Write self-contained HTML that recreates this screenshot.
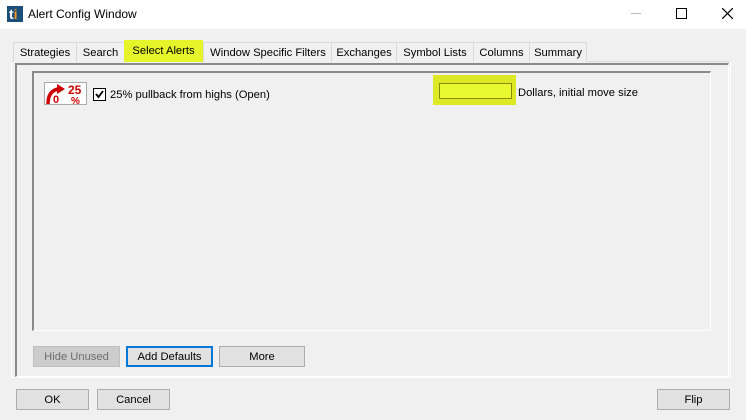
<!DOCTYPE html>
<html><head><style>
body{margin:0;width:746px;height:420px;background:#f0f0f0;font-family:"Liberation Sans",sans-serif;font-size:11.2px;position:relative;overflow:hidden;color:#000}
.a{position:absolute}
.title{left:0;top:0;width:746px;height:29px;background:#fff}
.tab{position:absolute;top:42px;height:19px;border:1px solid #d9d9d9;border-bottom:none;background:#f0f0f0;line-height:20px;text-align:center;font-size:11.2px}
.btn{position:absolute;height:19px;border:1px solid #adadad;background:#e1e1e1;text-align:center;line-height:20px;font-size:11.2px}
</style></head><body>
<div class="a title"></div>
<div class="a" style="left:7px;top:6px;width:16px;height:16px;background:#1a4f7a;color:#fff;font-weight:bold;font-size:14px;line-height:16px;"><span style="margin-left:2px">t</span><span style="color:#f7941d">i</span></div>
<div class="a" style="left:28px;top:7px;font-size:12px">Alert Config Window</div>
<div class="a" style="left:631px;top:13px;width:10px;height:1px;background:#bbb"></div>
<div class="a" style="left:676px;top:8px;width:9px;height:9px;border:1px solid #000"></div>
<svg class="a" style="left:722px;top:8px" width="11" height="11"><path d="M0 0L11 11M11 0L0 11" stroke="#000" stroke-width="1.2"/></svg>

<div class="a" style="left:11px;top:61px;width:718px;height:315px;border:1px solid #fff;border-top:1px solid #d9d9d9"></div>
<div class="a" style="left:15px;top:63px;width:711px;height:311px;border-top:2px solid #8a8a8a;border-left:2px solid #8a8a8a;border-right:1px solid #fff;border-bottom:1px solid #fff"></div>
<div class="a" style="left:32px;top:71px;width:676px;height:257px;border-top:2px solid #8a8a8a;border-left:2px solid #8a8a8a;border-right:1px solid #fff;border-bottom:1px solid #fff"></div>

<div class="tab" style="left:13px;width:62px">Strategies</div>
<div class="tab" style="left:76px;width:47px">Search</div>
<div class="tab" style="left:124px;top:40px;height:21px;width:77px;background:#e6f52a;border-color:#e6f52a;line-height:21px">Select Alerts</div>
<div class="tab" style="left:203px;width:128px">Window Specific Filters</div>
<div class="tab" style="left:331px;width:64px">Exchanges</div>
<div class="tab" style="left:396px;width:76px">Symbol Lists</div>
<div class="tab" style="left:473px;width:55px">Columns</div>
<div class="tab" style="left:529px;width:56px">Summary</div>

<div class="a" style="left:44px;top:82px;width:41px;height:21px;background:#fff;border:1px solid #aaa"></div>
<svg class="a" style="left:45px;top:83px" width="40" height="21" viewBox="0 0 40 21">
<path d="M3 21 Q3 8 13 6" stroke="#c00" stroke-width="3.5" fill="none"/><path d="M12 1 L20 6 L12 11 Z" fill="#c00"/>
<text x="8" y="20" font-size="11" font-weight="bold" fill="#c00" font-family="Liberation Sans">0</text>
<text x="23" y="11" font-size="12" font-weight="bold" fill="#c00" font-family="Liberation Sans">25</text>
<text x="26" y="21" font-size="10" font-weight="bold" fill="#c00" font-family="Liberation Sans">%</text>
</svg>
<div class="a" style="left:93px;top:88px;width:11px;height:11px;border:1px solid #000;background:#fff"></div>
<svg class="a" style="left:94px;top:89px" width="11" height="11"><path d="M2 5L4.5 8L9 2" stroke="#000" stroke-width="1.8" fill="none"/></svg>
<div class="a" style="left:110px;top:89px">25% pullback from highs (Open)</div>
<div class="a" style="left:433px;top:75px;width:83px;height:30px;background:#dde925"></div>
<div class="a" style="left:439px;top:83px;width:71px;height:14px;background:#e9f92f;border:1px solid #8a8a00"></div>
<div class="a" style="left:518px;top:87px">Dollars, initial move size</div>

<div class="btn" style="left:33px;top:346px;width:85px;color:#6d6d6d;background:#cccccc;border-color:#bfbfbf">Hide Unused</div>
<div class="btn" style="left:126px;top:346px;width:83px;border:2px solid #0078d7;height:17px;line-height:18px">Add Defaults</div>
<div class="btn" style="left:219px;top:346px;width:84px">More</div>
<div class="btn" style="left:16px;top:389px;width:71px">OK</div>
<div class="btn" style="left:97px;top:389px;width:71px">Cancel</div>
<div class="btn" style="left:657px;top:389px;width:71px">Flip</div>
</body></html>
